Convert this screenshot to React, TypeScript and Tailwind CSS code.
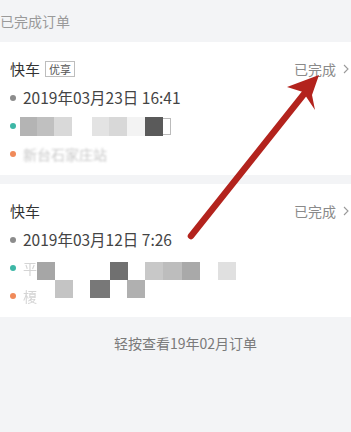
const font = { fontFamily: '"Noto Sans CJK SC", "Noto Sans", sans-serif' };

type Block = { x: number; y: number; w: number; h: number; c: string };

const Dot = ({ color }: { color: string }) => (
  <span className={`w-[6px] h-[6px] rounded-full shrink-0 ${color}`} />
);

const Mosaic = ({ blocks }: { blocks: Block[] }) => (
  <>
    {blocks.map((b, i) => (
      <span
        key={i}
        className="absolute"
        style={{ left: b.x, top: b.y, width: b.w, height: b.h, background: b.c }}
      />
    ))}
  </>
);

const Status = () => (
  <div className="flex items-center gap-[7px] text-[14px] text-[#8a8a8a]">
    <span>已完成</span>
    <svg width="6" height="10" viewBox="0 0 6 10" fill="none">
      <path d="M1 1l4 4-4 4" stroke="#9a9a9a" strokeWidth="1.1" />
    </svg>
  </div>
);

// pixelated address blocks, offsets relative to their row
const card1Row2: Block[] = [
  { x: 20, y: 5, w: 17, h: 19, c: '#b4b4b4' },
  { x: 37, y: 5, w: 17, h: 19, c: '#c0c0c0' },
  { x: 54, y: 5, w: 18, h: 19, c: '#d9d9d9' },
  { x: 92, y: 5, w: 17, h: 19, c: '#e3e3e3' },
  { x: 109, y: 5, w: 18, h: 19, c: '#d8d8d8' },
  { x: 127, y: 5, w: 18, h: 19, c: '#f3f3f3' },
  { x: 145, y: 5, w: 18, h: 19, c: '#5a5a5a' },
];

const card2Row2: Block[] = [
  { x: 37, y: 8, w: 18, h: 18, c: '#a6a6a6' },
  { x: 110, y: 8, w: 18, h: 18, c: '#707070' },
  { x: 145, y: 8, w: 18, h: 18, c: '#c8c8c8' },
  { x: 163, y: 8, w: 19, h: 18, c: '#bdbdbd' },
  { x: 182, y: 8, w: 18, h: 18, c: '#a9a9a9' },
  { x: 218, y: 8, w: 18, h: 18, c: '#e0e0e0' },
];

const card2Row3: Block[] = [
  { x: 55, y: -2, w: 18, h: 18, c: '#c4c4c4' },
  { x: 90, y: -2, w: 20, h: 18, c: '#787878' },
  { x: 127, y: -2, w: 18, h: 18, c: '#b0b0b0' },
];

export default function App() {
  return (
    <div className="relative w-[351px] h-[432px] overflow-hidden bg-[#f3f4f6]" style={font}>
      <div className="h-[42px] flex items-center text-[14px] text-[#9a9a9a]">已完成订单</div>

      <div className="bg-white pt-[12px] pb-[7px]">
        <div className="h-[30px] flex items-center justify-between pl-[10px] pr-[2px]">
          <div className="flex items-center gap-[5px]">
            <span className="text-[15px] text-[#333]">快车</span>
            <span className="border border-[#bdbdbd] text-[11px] leading-[14px] px-[3px] text-[#555]">优享</span>
          </div>
          <Status />
        </div>
        <div className="h-[28px] flex items-center gap-[7px] pl-[10px]">
          <Dot color="bg-[#8c8c8c]" />
          <span className="text-[15.5px] text-[#444]">2019年03月23日 16:41</span>
        </div>
        <div className="relative h-[28px] flex items-center gap-[7px] pl-[10px]">
          <Dot color="bg-[#3db7a6]" />
          <Mosaic blocks={card1Row2} />
          <span className="absolute left-[163px] top-[6px] w-[8px] h-[17px] border border-l-0 border-[#bbb]" />
        </div>
        <div className="h-[28px] flex items-center gap-[7px] pl-[10px]">
          <Dot color="bg-[#f08a5a]" />
          <span className="text-[14px] text-[#c8c8c8] blur-[0.9px]">新台石家庄站</span>
        </div>
      </div>

      <div className="bg-white mt-[9px] pt-[12px] pb-[7px]">
        <div className="h-[30px] flex items-center justify-between pl-[10px] pr-[2px]">
          <span className="text-[15px] text-[#333]">快车</span>
          <Status />
        </div>
        <div className="h-[28px] flex items-center gap-[7px] pl-[10px]">
          <Dot color="bg-[#8c8c8c]" />
          <span className="text-[15.5px] text-[#444]">2019年03月12日 7:26</span>
        </div>
        <div className="relative h-[28px] flex items-center gap-[7px] pl-[10px]">
          <Dot color="bg-[#3db7a6]" />
          <span className="text-[14px] text-[#d4d4d4] blur-[0.4px]">平</span>
          <Mosaic blocks={card2Row2} />
        </div>
        <div className="relative h-[28px] flex items-center gap-[7px] pl-[10px]">
          <Dot color="bg-[#f08a5a]" />
          <span className="text-[14px] text-[#d4d4d4] blur-[0.4px]">榎</span>
          <Mosaic blocks={card2Row3} />
        </div>
      </div>

      <div className="mt-[16px] text-center text-[14px] leading-[20px] text-[#7a7a7a] pl-[20px]">
        轻按查看19年02月订单
      </div>

      <svg className="absolute inset-0 pointer-events-none" width="351" height="432" viewBox="0 0 351 432">
        <line x1="191" y1="236" x2="308" y2="89" stroke="#b3231d" strokeWidth="6.5" strokeLinecap="round" />
        <polygon points="319,75 287,87 303,92 315,110 312,95" fill="#b3231d" />
      </svg>
    </div>
  );
}
